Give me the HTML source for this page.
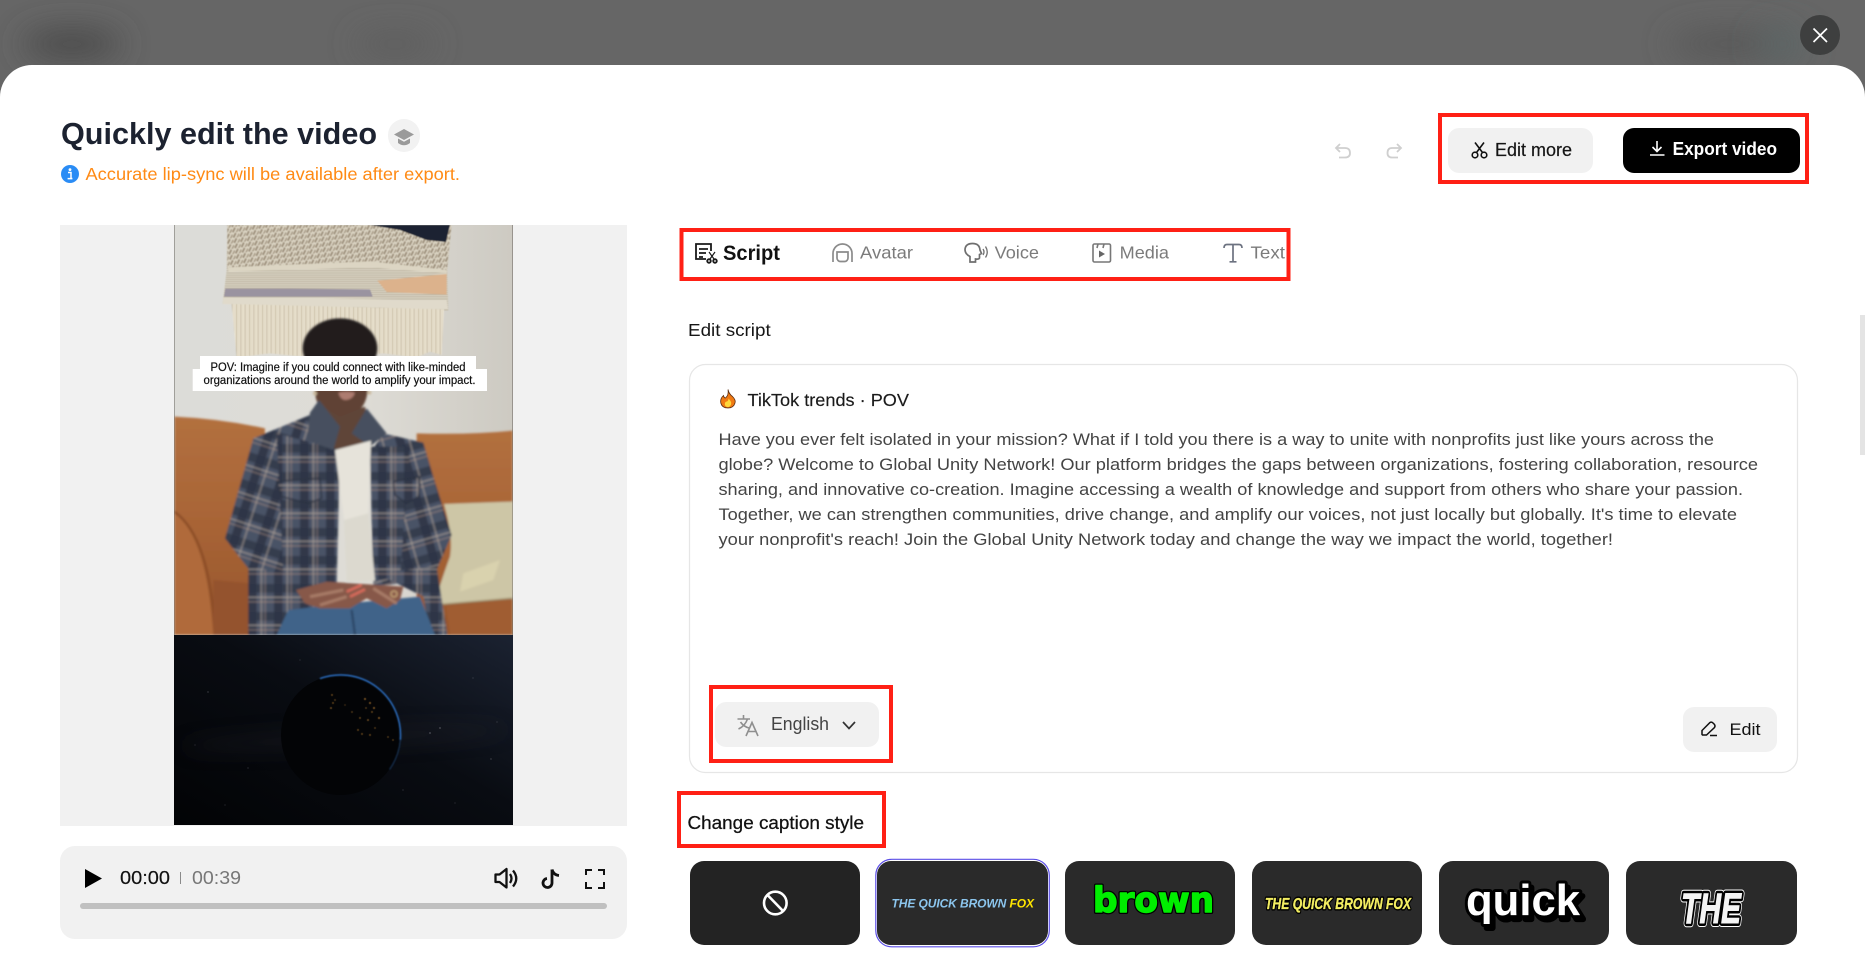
<!DOCTYPE html>
<html lang="en">
<head>
<meta charset="utf-8">
<title>Quickly edit the video</title>
<style>
html,body{margin:0;padding:0;background:#fff;width:1865px;height:969px;overflow:hidden}
svg{display:block;position:absolute;left:0;top:0}
text{font-family:"Liberation Sans","DejaVu Sans",sans-serif;white-space:pre}
.p{font-size:17px;fill:#444}
.tab{font-size:17.5px;fill:#7b7b7b}
.cap{font-size:11.5px;fill:#111;stroke:#111;stroke-width:.2}
</style>
</head>
<body>
<svg width="1865" height="969" viewBox="0 0 1865 969" xmlns="http://www.w3.org/2000/svg">
<defs>
  <filter id="b30" x="-150%" y="-400%" width="400%" height="900%"><feGaussianBlur stdDeviation="16"/></filter>
  <filter id="b2"><feGaussianBlur stdDeviation="3"/></filter>
  <filter id="b05"><feGaussianBlur stdDeviation="1.2"/></filter>
  <filter id="b8" x="-20%" y="-300%" width="140%" height="700%"><feGaussianBlur stdDeviation="10"/></filter>
  <filter id="b1"><feGaussianBlur stdDeviation=".4"/></filter>
  <filter id="bl" x="-20%" y="-20%" width="140%" height="140%"><feGaussianBlur stdDeviation=".7"/></filter>
  <pattern id="knit" width="20" height="16" patternUnits="userSpaceOnUse" patternTransform="rotate(-8)">
    <rect width="20" height="16" fill="#dcd5c4"/>
    <path d="M1 15 L10 2" stroke="#9f927e" stroke-width="6"/>
    <path d="M11 18 L20 5" stroke="#ab9f8b" stroke-width="5"/>
  </pattern>
  <pattern id="row" width="12" height="13" patternUnits="userSpaceOnUse">
    <rect width="12" height="13" fill="#e0dacb"/>
    <path d="M0 3H12M0 9.5H12" stroke="#b3aa96" stroke-width="3"/>
  </pattern>
  <pattern id="fringe" width="13" height="20" patternUnits="userSpaceOnUse">
    <rect width="13" height="20" fill="#ebe4d2"/>
    <rect x="3" width="3" height="20" fill="#c3b79e"/>
    <rect x="10" width="1.5" height="20" fill="#d3c9b2"/>
  </pattern>
  <pattern id="plaid" width="78" height="84" patternUnits="userSpaceOnUse">
    <rect width="78" height="84" fill="#4a5266"/>
    <rect x="0" width="26" height="84" fill="#2c3344" opacity=".8"/>
    <rect y="0" width="78" height="26" fill="#2c3344" opacity=".7"/>
    <rect x="38" width="4" height="84" fill="#bfb0a2" opacity=".6"/>
    <rect x="50" width="3" height="84" fill="#c9a68e" opacity=".5"/>
    <rect y="38" width="78" height="4" fill="#bfb0a2" opacity=".65"/>
    <rect y="52" width="78" height="3" fill="#c9a68e" opacity=".55"/>
  </pattern>
  <pattern id="plaidL" width="78" height="84" patternUnits="userSpaceOnUse" patternTransform="rotate(18)">
    <rect width="78" height="84" fill="#4a5266"/>
    <rect x="0" width="26" height="84" fill="#2c3344" opacity=".8"/>
    <rect y="0" width="78" height="26" fill="#2c3344" opacity=".7"/>
    <rect x="38" width="4" height="84" fill="#bfb0a2" opacity=".6"/>
    <rect y="38" width="78" height="4" fill="#bfb0a2" opacity=".65"/>
    <rect y="52" width="78" height="3" fill="#c9a68e" opacity=".55"/>
  </pattern>
  <pattern id="plaidR" width="78" height="84" patternUnits="userSpaceOnUse" patternTransform="rotate(-16)">
    <rect width="78" height="84" fill="#4a5266"/>
    <rect x="0" width="26" height="84" fill="#2c3344" opacity=".8"/>
    <rect y="0" width="78" height="26" fill="#2c3344" opacity=".7"/>
    <rect x="38" width="4" height="84" fill="#bfb0a2" opacity=".6"/>
    <rect y="38" width="78" height="4" fill="#bfb0a2" opacity=".65"/>
    <rect y="52" width="78" height="3" fill="#c9a68e" opacity=".55"/>
  </pattern>
  <linearGradient id="wall" x1="0" x2="1" y1="0" y2="0">
    <stop offset="0" stop-color="#dcdcd8"/><stop offset=".55" stop-color="#dedcd6"/><stop offset="1" stop-color="#cdcac2"/>
  </linearGradient>
  <linearGradient id="sofa" x1="0" x2="0" y1="0" y2="1">
    <stop offset="0" stop-color="#b2703f"/><stop offset=".5" stop-color="#a86436"/><stop offset="1" stop-color="#96552c"/>
  </linearGradient>
  <linearGradient id="space" x1="0" y1="1" x2="1" y2="0">
    <stop offset="0" stop-color="#020305"/><stop offset=".55" stop-color="#090c12"/><stop offset="1" stop-color="#1b2231"/>
  </linearGradient>
  <clipPath id="topclip"><rect width="1865" height="70"/></clipPath>
  <clipPath id="photoclip"><rect x="13" y="15" width="1015" height="1230"/></clipPath>
  <clipPath id="earthclip"><rect x="174" y="635" width="339" height="190"/></clipPath>
</defs>

<!-- dimmed page -->
<rect width="1865" height="969" fill="#666"/>
<g clip-path="url(#topclip)">
  <ellipse cx="72" cy="44" rx="50" ry="14" fill="#474747" filter="url(#b30)"/>
  <ellipse cx="395" cy="44" rx="40" ry="10" fill="#5c5c5c" filter="url(#b30)"/>
  <ellipse cx="1730" cy="44" rx="60" ry="14" fill="#575757" filter="url(#b30)"/>
  <ellipse cx="1782" cy="44" rx="24" ry="14" fill="#5c6768" filter="url(#b30)"/>
</g>
<rect x="0" y="65" width="1865" height="950" rx="32" ry="32" fill="#fff"/>

<!-- close -->
<circle cx="1820" cy="35" r="20" fill="#3e3f3f"/>
<path d="M1813.5 28.5L1827 42M1827 28.5L1813.5 42" stroke="#fff" stroke-width="1.7" fill="none"/>

<!-- scrollbar -->
<rect x="1860" y="315" width="5" height="140" fill="#e4e4e4"/>

<!-- header -->
<text x="61" y="144" font-size="31" font-weight="700" fill="#1c2230" textLength="316" lengthAdjust="spacingAndGlyphs">Quickly edit the video</text>
<rect x="388" y="119" width="32" height="33" rx="16" fill="#f2f2f2"/>
<path d="M404 129L414 134.5 404 140 394 134.5Z" fill="#9a9a9a"/>
<path d="M398 138.5V143Q404 147.5 410 143V138.5L404 141.8Z" fill="#9a9a9a"/>
<circle cx="70" cy="174" r="9" fill="#2a8cf5"/>
<circle cx="70" cy="169.6" r="1.4" fill="#fff"/>
<path d="M68 172.5H71V178.5H72.3M67.6 178.6H72.4" stroke="#fff" stroke-width="1.5" fill="none"/>
<text x="85.5" y="180" font-size="17.5" fill="#ff8a14" textLength="374.5" lengthAdjust="spacingAndGlyphs">Accurate lip-sync will be available after export.</text>

<!-- undo/redo -->
<path d="M1340 144L1336 148 1340 152M1336 148H1345Q1350 148 1350 153 1350 157.5 1345 157.5H1339" fill="none" stroke="#cfcfcf" stroke-width="1.8"/>
<path d="M1397 144L1401 148 1397 152M1401 148H1392Q1387.5 148 1387.5 153 1387.5 157.5 1392 157.5H1398" fill="none" stroke="#cfcfcf" stroke-width="1.8"/>

<!-- action buttons -->
<rect x="1448" y="128" width="145" height="45" rx="11" fill="#f1f1f1"/>
<g fill="none" stroke="#111" stroke-width="1.6">
  <circle cx="1475" cy="155" r="2.8"/><circle cx="1484" cy="155" r="2.8"/>
  <path d="M1476.5 152.5L1484 142.5M1482.5 152.5L1475 142.5"/>
</g>
<text x="1495" y="156" font-size="18" fill="#151515" stroke="#151515" stroke-width=".2" textLength="77" lengthAdjust="spacingAndGlyphs">Edit more</text>
<rect x="1623" y="128" width="177" height="45" rx="11" fill="#000"/>
<path d="M1657 141V151M1652.5 147L1657 151.5 1661.5 147M1650 155H1664.5" fill="none" stroke="#fff" stroke-width="1.6"/>
<text x="1672.6" y="155" font-size="18.5" font-weight="700" fill="#fff" textLength="104.4" lengthAdjust="spacingAndGlyphs">Export video</text>
<rect x="1440" y="115" width="367" height="67" fill="none" stroke="#ff2015" stroke-width="4"/>

<!-- video stage -->
<rect x="60" y="225" width="567" height="601" fill="#f1f1f1"/>
<rect x="174" y="225" width="339" height="410" fill="#55524d"/>
<g transform="translate(170 220) scale(.33333)">
  <g clip-path="url(#photoclip)">
    <rect x="13" y="15" width="1015" height="1230" fill="url(#wall)"/>
    <!-- tapestry -->
    <g filter="url(#b05)">
      <path d="M172 15H845L832 150 835 272 158 250 170 150Z" fill="url(#row)"/>
      <path d="M172 15H845L830 152 600 130 172 146Z" fill="url(#knit)"/>
      <path d="M600 15H840L828 66 770 60 690 30Z" fill="#1d2333"/>
      <path d="M175 142L600 124 830 150 830 160 600 142 175 155Z" fill="#dcd5c3"/>
      <path d="M622 182L830 162V224L650 216Z" fill="#dcb28c"/>
      <path d="M166 206H360L600 208 608 230H162Z" fill="#9a93a0"/>
      <path d="M160 232L830 240 834 268 158 252Z" fill="#e0dacb"/>
      <path d="M185 252L822 268 815 405 780 395 740 412 640 400 560 410 380 408 300 400 200 412Z" fill="url(#fringe)"/>
    </g>
    <g filter="url(#b2)">
      <!-- sofa -->
      <path d="M13 590Q150 596 285 625L265 1245H13Z" fill="url(#sofa)"/>
      <path d="M740 640Q900 645 1028 632V1245H740Z" fill="url(#sofa)"/>
      <path d="M13 880Q110 950 130 1245H13Z" fill="#b06a3a"/>
      <path d="M13 875Q120 950 135 1245" fill="none" stroke="#8a4c28" stroke-width="7"/>
      <path d="M130 1080L240 1090 235 1245H130Z" fill="#94532d"/>
      <path d="M830 1160L1028 1140V1245H840Z" fill="#a05d33"/>
      <!-- pillow -->
      <path d="M822 852L1028 845V1135L795 1155Q800 1120 840 1010 850 950 822 852Z" fill="#cdc6a6"/>
      <path d="M880 1060L990 1020 970 1080 870 1115Z" fill="#d9d2ae"/>
      <path d="M795 1155L1028 1135" stroke="#9a8f6c" stroke-width="6" opacity=".6"/>
      <!-- head -->
      <ellipse cx="510" cy="385" rx="112" ry="90" fill="#231f1f"/>
      <path d="M432 420H592V520Q580 590 510 590 445 590 435 520Z" fill="#614235"/>
      <path d="M505 518Q530 512 555 518 548 540 525 540 510 538 505 518Z" fill="#ad7c70"/>
      <circle cx="435" cy="520" r="6" fill="#c9b79a"/><circle cx="598" cy="518" r="6" fill="#c9b79a"/>
      <path d="M445 550L510 590 585 560 600 670 510 705 430 640Z" fill="#5e4439"/>
      <!-- shirt -->
      <path d="M165 955L250 655 420 585 450 700 440 1100 400 1130 250 1065Z" fill="url(#plaidL)"/>
      <path d="M760 668L640 640 600 700 610 1100 690 1090 800 1050 845 945 790 770Z" fill="url(#plaidR)"/>
      <path d="M235 1040L520 1090 530 1245H235Z" fill="url(#plaid)"/>
      <path d="M620 1060L800 1040 832 1245H780L760 1130Z" fill="url(#plaid)"/>
      <path d="M320 640L510 690 500 1090 340 1060Z" fill="url(#plaid)"/>
      <path d="M600 680L720 680 690 1075 610 1080Z" fill="url(#plaid)"/>
      <path d="M420 578L447 540 510 620 490 690 410 660Z" fill="#47505f"/>
      <path d="M590 565L650 640 600 680 545 640Z" fill="#47505f"/>
      <!-- tee -->
      <path d="M495 690L603 662 595 880 615 1082 530 1085 522 900Z" fill="#e6e3da"/>
      <path d="M522 900L595 880 615 1082 530 1085Z" fill="#dcd9cf"/>
      <!-- pockets -->
      <path d="M320 785L450 775 455 835 415 850 335 830Z" fill="url(#plaid)" stroke="#2a3040" stroke-width="4"/>
      <path d="M670 785L750 770 745 830 710 850 675 825Z" fill="url(#plaid)" stroke="#2a3040" stroke-width="4"/>
      <!-- jeans -->
      <path d="M320 1245L355 1170 530 1150 750 1130 795 1245Z" fill="#3f6389"/>
      <path d="M545 1170L555 1245" stroke="#28405f" stroke-width="6"/>
      <!-- hands -->
      <path d="M378 1110L470 1085 580 1092 700 1100 690 1140 650 1165 590 1135 540 1165 450 1165 405 1150Z" fill="#87594a"/>
      <path d="M420 1130L520 1110M450 1155L530 1130M610 1105L680 1150" stroke="#a87c68" stroke-width="9"/>
      <path d="M530 1115L575 1095M540 1130L585 1108" stroke="#d86a5c" stroke-width="8"/>
      <circle cx="672" cy="1122" r="9" fill="none" stroke="#c9a878" stroke-width="4"/>
    </g>
  </g>
</g>
<!-- earth -->
<g clip-path="url(#earthclip)">
  <rect x="174" y="635" width="339" height="190" fill="url(#space)"/>
  <ellipse cx="345" cy="738" rx="165" ry="8" fill="#26262e" opacity=".4" filter="url(#b8)" transform="rotate(-3 345 738)"/>
  <g fill="#8c8c96">
    <circle cx="208" cy="692" r=".45"/><circle cx="248" cy="768" r=".4"/><circle cx="430" cy="733" r=".6"/><circle cx="440" cy="728" r=".6"/>
    <circle cx="491" cy="759" r=".45"/><circle cx="473" cy="678" r=".4"/><circle cx="403" cy="790" r=".4"/><circle cx="225" cy="805" r=".35"/>
    <circle cx="300" cy="660" r=".35"/><circle cx="497" cy="722" r=".4"/><circle cx="455" cy="803" r=".35"/><circle cx="195" cy="745" r=".35"/>
  </g>
  <ellipse cx="340.5" cy="735" rx="59.5" ry="60" fill="#030406"/>
  <path d="M320 678.6A60 60 0 0 1 400.3 740" fill="none" stroke="#2c6fc4" stroke-width="1.5" filter="url(#bl)"/>
  <path d="M400.3 740A60 60 0 0 1 389.6 769.4" fill="none" stroke="#143459" stroke-width="1.1" filter="url(#bl)"/>
  <g fill="#b47a30" filter="url(#b1)">
    <circle cx="332" cy="695" r=".7"/><circle cx="333" cy="703" r=".7"/><circle cx="331" cy="708" r=".8"/><circle cx="335" cy="700" r=".6"/>
    <circle cx="365" cy="699" r=".9"/><circle cx="370" cy="703" r=".9"/><circle cx="374" cy="708" r=".9"/><circle cx="379" cy="718" r=".9"/>
    <circle cx="352" cy="712" r=".6"/><circle cx="360" cy="718" r=".7"/><circle cx="368" cy="720" r=".8"/><circle cx="358" cy="730" r=".7"/>
    <circle cx="362" cy="734" r=".7"/><circle cx="370" cy="735" r=".7"/><circle cx="388" cy="737" r=".6"/><circle cx="393" cy="740" r=".6"/>
    <circle cx="345" cy="705" r=".5"/><circle cx="375" cy="728" r=".6"/><circle cx="372" cy="712" r=".7"/><circle cx="366" cy="708" r=".6"/>
  </g>
</g>
<!-- burned-in caption -->
<rect x="200" y="356" width="276" height="14" fill="#fff"/>
<rect x="192.7" y="369" width="294.3" height="22" fill="#fff"/>
<text class="cap" x="210.5" y="371" textLength="255" lengthAdjust="spacingAndGlyphs">POV: Imagine if you could connect with like-minded</text>
<text class="cap" x="203.5" y="384" textLength="272" lengthAdjust="spacingAndGlyphs">organizations around the world to amplify your impact.</text>

<!-- player -->
<rect x="60" y="846" width="567" height="93" rx="15" fill="#f1f1f1"/>
<path d="M85 869L102 878.5 85 888Z" fill="#000"/>
<text x="120" y="884" font-size="18" fill="#111" stroke="#111" stroke-width=".15" textLength="50" lengthAdjust="spacingAndGlyphs">00:00</text>
<rect x="180" y="872" width="1" height="12" fill="#8a8a8a"/>
<text x="192" y="884" font-size="18" fill="#777" textLength="49" lengthAdjust="spacingAndGlyphs">00:39</text>
<g fill="none" stroke="#111" stroke-width="2.3">
  <path d="M495.5 874.5H499.5L506.5 869V887.5L499.5 882H495.5Z" stroke-linejoin="round"/>
  <path d="M510 874Q513 878.5 510 883M513 870.5Q519.5 878.5 513 886.5"/>
  <path d="M552 869.5V883A4.5 4.5 0 1 1 547 878.5" stroke-width="2.8"/>
  <path d="M552 869.5Q553.5 875 559 875.5" stroke-width="2.8"/>
  <path d="M586 875V870H592M598 870H604V875M604 882V888H598M592 888H586V882" stroke-width="2"/>
</g>
<rect x="80" y="903" width="527" height="6" rx="3" fill="#c0c0c0"/>

<!-- tabs -->
<g fill="none" stroke="#1a1a1a" stroke-width="1.8">
  <path d="M706 259H696V244H711V251"/>
  <path d="M699 249H708M699 253H706M699 257H703"/>
  <circle cx="709" cy="261" r="1.8"/><circle cx="715" cy="261" r="1.8"/>
  <path d="M710 259L715 252M714 259L709 252" stroke-width="1.2"/>
</g>
<text x="723" y="260" font-size="21.5" font-weight="700" fill="#111" textLength="57" lengthAdjust="spacingAndGlyphs">Script</text>
<g fill="none" stroke="#8b8b8b" stroke-width="1.7">
  <path d="M833 262V253.5A9.5 9.5 0 0 1 852 253.5V262"/>
  <path d="M837 252H848V258A3.5 3.5 0 0 1 844.5 261.5H840.5A3.5 3.5 0 0 1 837 258Z"/>
</g>
<text class="tab" x="860" y="258.5" textLength="53" lengthAdjust="spacingAndGlyphs">Avatar</text>
<g fill="none" stroke="#6f6f6f" stroke-width="1.7">
  <path d="M970 262V256.5Q965 254 965 249.5 965.5 243.5 972.5 243.5 979.5 243.5 980 250L981.5 253.5 979.5 254.5V258Q979 259.5 975.5 259V262Z"/>
  <path d="M983 249Q985 252 983 255M985.5 246.5Q989 252 985.5 257.5" stroke-width="1.3"/>
</g>
<text class="tab" x="994.6" y="258.5" textLength="44.4" lengthAdjust="spacingAndGlyphs">Voice</text>
<g fill="none" stroke="#777" stroke-width="1.6">
  <rect x="1093" y="244" width="17.5" height="18" rx="1.5"/>
  <path d="M1098 244L1097 248M1104 244L1103 248"/>
</g>
<path d="M1099 250.5L1105 254 1099 257.5Z" fill="#666"/>
<text class="tab" x="1119.6" y="258.5" textLength="49.4" lengthAdjust="spacingAndGlyphs">Media</text>
<path d="M1224 248Q1224 244.5 1227 244.5H1239Q1242 244.5 1242 248M1233 244.5V261.5M1229.5 261.8H1236.5" fill="none" stroke="#6c7280" stroke-width="1.7"/>
<text class="tab" x="1250.5" y="258.5" textLength="34.5" lengthAdjust="spacingAndGlyphs">Text</text>
<rect x="681.5" y="230" width="607" height="49" fill="none" stroke="#ff2015" stroke-width="4"/>

<!-- script card -->
<text x="688" y="336" font-size="17.5" fill="#151515" textLength="82.7" lengthAdjust="spacingAndGlyphs">Edit script</text>
<rect x="689.5" y="364.5" width="1108" height="408" rx="16" fill="#fff" stroke="#e6e6e6" stroke-width="1.2"/>
<path d="M728 389.5Q729 394 732.5 396.5 736 400 735 403 733.5 408 728 408 722 408 720.8 403 720 398.5 723.5 395.5 724 398 725.5 398 729 395 728 389.5Z" fill="#f07a13" stroke="#5a2c10" stroke-width=".8"/>
<path d="M728.5 398.5Q732 402 731 404.5 730 407 728 407 725 407 724.8 404 725 401.5 727 401.5 728.5 400.5 728.5 398.5Z" fill="#ffd83a"/>
<text x="747.5" y="406" font-size="17.5" fill="#1a1a1a" stroke="#1a1a1a" stroke-width=".15" textLength="161.5" lengthAdjust="spacingAndGlyphs">TikTok trends · POV</text>

<text class="p" x="718.5" y="445" textLength="995.5" lengthAdjust="spacingAndGlyphs">Have you ever felt isolated in your mission? What if I told you there is a way to unite with nonprofits just like yours across the</text>
<text class="p" x="718.5" y="470" textLength="1039.5" lengthAdjust="spacingAndGlyphs">globe? Welcome to Global Unity Network! Our platform bridges the gaps between organizations, fostering collaboration, resource</text>
<text class="p" x="718.5" y="495" textLength="1024.5" lengthAdjust="spacingAndGlyphs">sharing, and innovative co-creation. Imagine accessing a wealth of knowledge and support from others who share your passion.</text>
<text class="p" x="718.5" y="520" textLength="1018.5" lengthAdjust="spacingAndGlyphs">Together, we can strengthen communities, drive change, and amplify our voices, not just locally but globally. It's time to elevate</text>
<text class="p" x="718.5" y="545" textLength="894.5" lengthAdjust="spacingAndGlyphs">your nonprofit's reach! Join the Global Unity Network today and change the way we impact the world, together!</text>

<!-- language -->
<rect x="715" y="702" width="164" height="45" rx="11" fill="#f1f1f1"/>
<g fill="none" stroke="#8f8f8f" stroke-width="1.6">
  <path d="M737.5 719H750M743.5 715V719M747.5 719Q745 726 738.5 729M740.5 722Q743.5 726.5 749 728"/>
  <path d="M746 736L752 722.5 758 736M748 731.5H756"/>
</g>
<text x="771" y="730" font-size="18" fill="#444" textLength="58" lengthAdjust="spacingAndGlyphs">English</text>
<path d="M843 722L849 728.5 855 722" fill="none" stroke="#333" stroke-width="1.7"/>
<rect x="711" y="687" width="180" height="74" fill="none" stroke="#ff2015" stroke-width="4"/>

<!-- edit button -->
<rect x="1683" y="707" width="94" height="45" rx="11" fill="#f1f1f1"/>
<path d="M1702 734.5V730.5L1710 722.5Q1711.5 721.5 1713 723L1714.5 724.5Q1715.5 726 1714.5 727.5L1706.5 735H1702.5ZM1710 735.5H1717" fill="none" stroke="#111" stroke-width="1.5"/>
<text x="1729.5" y="735" font-size="17" fill="#111" textLength="31" lengthAdjust="spacingAndGlyphs">Edit</text>

<!-- caption styles -->
<text x="687.5" y="829" font-size="18" fill="#111" stroke="#111" stroke-width=".25" textLength="176.5" lengthAdjust="spacingAndGlyphs">Change caption style</text>
<rect x="679" y="793" width="205" height="53" fill="none" stroke="#ff2015" stroke-width="4"/>

<rect x="690" y="861" width="170" height="84" rx="14" fill="#232323"/>
<circle cx="775.3" cy="903" r="11.3" fill="none" stroke="#fff" stroke-width="2.6"/>
<path d="M767.5 895L783 911" stroke="#fff" stroke-width="2.6"/>

<rect x="875.8" y="859.3" width="173.5" height="87.5" rx="16" fill="#fff" stroke="#5b4ee6" stroke-width="1.2"/>
<rect x="877" y="861" width="171" height="84" rx="14" fill="#2a2a2a"/>
<text x="891.5" y="907.5" font-size="12" font-weight="700" font-style="italic" fill="#8cc6ee" textLength="142.5" lengthAdjust="spacing">THE QUICK BROWN <tspan fill="#ffe600">FOX</tspan></text>

<rect x="1065" y="861" width="170" height="84" rx="14" fill="#2a2a2a"/>
<text x="1093" y="912" font-size="35" font-weight="700" fill="#000" stroke="#000" stroke-width="4" stroke-linejoin="round" textLength="121" lengthAdjust="spacingAndGlyphs" style="font-family:'DejaVu Sans',sans-serif">brown</text>
<text x="1093" y="912" font-size="35" font-weight="700" fill="#00ee00" stroke="#00ee00" stroke-width="1.4" stroke-linejoin="round" textLength="121" lengthAdjust="spacingAndGlyphs" style="font-family:'DejaVu Sans',sans-serif">brown</text>

<rect x="1252" y="861" width="170" height="84" rx="14" fill="#2a2a2a"/>
<text x="1265" y="909" font-size="15.5" font-weight="700" font-style="italic" fill="#000" stroke="#000" stroke-width="3.2" stroke-linejoin="round" textLength="146" lengthAdjust="spacingAndGlyphs">THE QUICK BROWN FOX</text>
<text x="1265" y="909" font-size="15.5" font-weight="700" font-style="italic" fill="#f3ee62" stroke="#f3ee62" stroke-width=".35" textLength="146" lengthAdjust="spacingAndGlyphs">THE QUICK BROWN FOX</text>

<rect x="1439" y="861" width="170" height="84" rx="14" fill="#2a2a2a"/>
<text x="1469" y="919" font-size="44" font-weight="700" fill="#000" stroke="#000" stroke-width="6" stroke-linejoin="round" textLength="114" lengthAdjust="spacingAndGlyphs">quick</text>
<text x="1466" y="915" font-size="44" font-weight="700" fill="#fff" stroke="#000" stroke-width="6" stroke-linejoin="round" paint-order="stroke" textLength="114" lengthAdjust="spacingAndGlyphs">quick</text>

<rect x="1626" y="861" width="171" height="84" rx="14" fill="#2a2a2a"/>
<text x="1681" y="923" font-size="43" font-weight="700" font-style="italic" fill="#fff" stroke="#fff" stroke-width="8" stroke-linejoin="round" textLength="60" lengthAdjust="spacingAndGlyphs">THE</text>
<text x="1681" y="923" font-size="43" font-weight="700" font-style="italic" fill="#000" stroke="#000" stroke-width="6" stroke-linejoin="round" textLength="60" lengthAdjust="spacingAndGlyphs">THE</text>
<text x="1681" y="923" font-size="43" font-weight="700" font-style="italic" fill="#f4f4f4" stroke="#f4f4f4" stroke-width=".9" textLength="60" lengthAdjust="spacingAndGlyphs">THE</text>
</svg>
</body>
</html>
